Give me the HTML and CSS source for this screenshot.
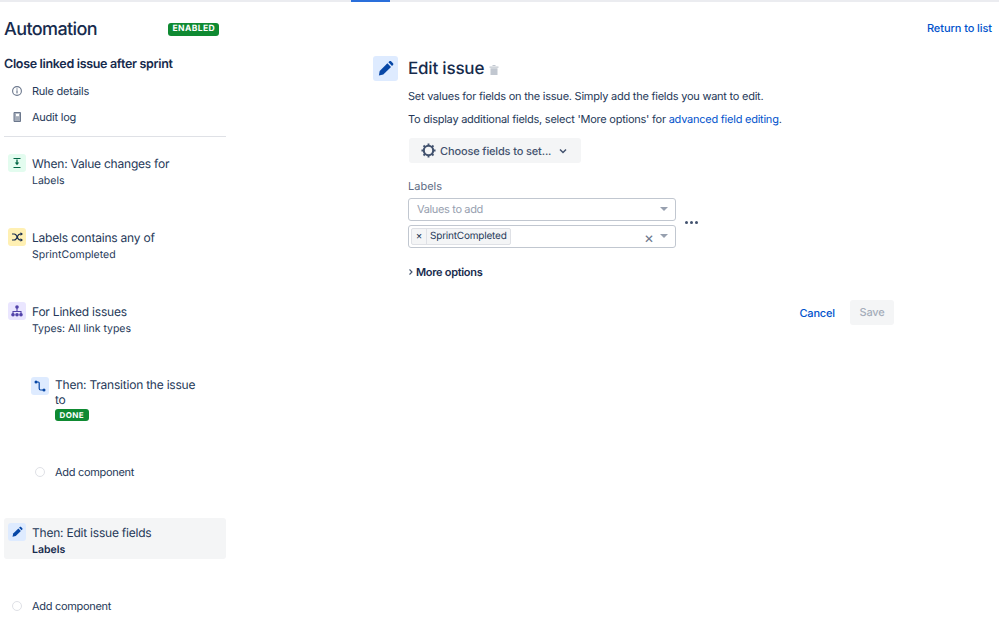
FILE: index.html
```html
<!DOCTYPE html>
<html lang="en">
<head>
<meta charset="utf-8">
<title>Automation</title>
<link rel="stylesheet" href="styles.css">
</head>
<body>
<div class="topbar"><div class="tab-active"></div></div>
<div class="page">
  <aside class="side">
    <div class="side-head">
      <h1 class="app-title">Automation</h1>
      <span class="lozenge lozenge-head">ENABLED</span>
    </div>
    <h2 class="rule-name">Close linked issue after sprint</h2>
    <nav class="side-nav">
      <div class="nav-item">
        <svg class="nav-icon" viewBox="0 0 12 12"><circle cx="6" cy="6" r="4.4" fill="none" stroke="#6b778c" stroke-width="1.1"/><rect x="5.4" y="5.3" width="1.2" height="3.1" fill="#6b778c"/><rect x="5.4" y="3.4" width="1.2" height="1.2" fill="#6b778c"/></svg>
        <span>Rule details</span>
      </div>
      <div class="nav-item">
        <svg class="nav-icon" viewBox="0 0 12 12"><path d="M3 1.500h6.500v9H3z" fill="#a5adba" stroke="#6b778c"/><rect x="5" y="2.800" width="3" height="2.400" fill="#fff"/></svg>
        <span>Audit log</span>
      </div>
    </nav>
    <div class="steps">
      <div class="step step-trigger">
        <div class="step-icon icon-green"><svg viewBox="0 0 18 18"><path d="M5.500 4.500h7M5.500 13.500h7" stroke="#006644" stroke-width="1.200"/><path d="M9 5.500v3.500" stroke="#006644" stroke-width="1.300"/><path d="M6.800 8.500h4.400L9 11.200z" fill="#006644"/></svg></div>
        <div class="step-text"><div class="step-title">When: Value changes for</div><div class="step-sub">Labels</div></div>
      </div>
      <div class="step step-trigger">
        <div class="step-icon icon-yellow"><svg viewBox="0 0 18 18"><path d="M4 6h2.200c1.600 0 2.200 1 3 3s1.400 3 3 3h1.300M4 12h2.200c1.600 0 2.200-1 3-3s1.400-3 3-3h1.300" fill="none" stroke="#172b4d" stroke-width="1.200"/><path d="M12.500 4.200 15 6l-2.500 1.800zM12.500 10.200 15 12l-2.500 1.800z" fill="#172b4d"/></svg></div>
        <div class="step-text"><div class="step-title">Labels contains any of</div><div class="step-sub">SprintCompleted</div></div>
      </div>
      <div class="step step-branch">
        <div class="step-icon icon-purple"><svg viewBox="0 0 18 18"><path d="M9 5v4M5 12.500V9.500h8v3" fill="none" stroke="#5243aa" stroke-width="1.100"/><circle cx="9" cy="5" r="1.800" fill="#5243aa"/><circle cx="5" cy="12.800" r="1.800" fill="#5243aa"/><circle cx="9" cy="12.800" r="1.800" fill="#5243aa"/><circle cx="13" cy="12.800" r="1.800" fill="#5243aa"/></svg></div>
        <div class="step-text"><div class="step-title">For Linked issues</div><div class="step-sub">Types: All link types</div></div>
      </div>
      <div class="step step-nested">
        <div class="step-icon icon-blue"><svg viewBox="0 0 18 18"><path d="M5 5h2.300c.6 0 .9.300.9.900v5.600c0 1 .5 1.500 1.500 1.500H13" fill="none" stroke="#0747a6" stroke-width="1.200"/><circle cx="5" cy="5" r="1.500" fill="#0747a6"/><circle cx="13" cy="13" r="1.500" fill="#0747a6"/></svg></div>
        <div class="step-text"><div class="step-title wrap">Then: Transition the issue to</div><span class="lozenge lozenge-done">DONE</span></div>
      </div>
      <div class="add add-nested"><span class="add-dot"></span><span>Add component</span></div>
      <div class="step step-selected">
        <div class="step-icon icon-blue"><svg viewBox="0 0 18 18"><path d="M5.200 10.600 10.400 5.400l2.500 2.500-5.200 5.200-3.200.7z" fill="#0747a6"/><path d="M11.100 4.700l.7-.7c.4-.4.900-.4 1.300 0l1.200 1.200c.4.400.4.900 0 1.300l-.7.700z" fill="#0747a6"/></svg></div>
        <div class="step-text"><div class="step-title">Then: Edit issue fields</div><div class="step-sub strong">Labels</div></div>
      </div>
      <div class="add add-root"><span class="add-dot"></span><span>Add component</span></div>
    </div>
  </aside>
  <main class="main">
    <div class="main-top"><a class="link return">Return to list</a></div>
    <div class="editor">
      <div class="editor-icon"><svg viewBox="0 0 25 25"><path d="M6.700 15 14.400 7.300l3.600 3.600-7.700 7.700-4.400 1z" fill="#0747a6"/><path d="M15.400 6.300l1-1c.5-.5 1.200-.5 1.700 0l1.900 1.900c.5.500.5 1.200 0 1.700l-1 1z" fill="#0747a6"/></svg></div>
      <div class="editor-body">
        <div class="editor-head">
          <h2 class="editor-title">Edit issue</h2>
          <svg class="trash" viewBox="0 0 12 12"><path d="M1.500 2.500h9v1.200h-9zM4.500 1h3v1h-3zM2.500 4.300h7V11h-7z" fill="#c1c7d0"/></svg>
        </div>
        <p class="desc desc-first">Set values for fields on the issue. Simply add the fields you want to edit.</p>
        <p class="desc">To display additional fields, select 'More options' for <a class="link-plain">advanced field editing</a>.</p>
        <div class="choose">
          <svg class="gear" viewBox="0 0 16 16"><circle cx="8" cy="8" r="5" fill="none" stroke="#42526e" stroke-width="2.200"/><path d="M8 .5v2.400M8 13.100v2.400M.5 8h2.400M13.100 8h2.400M2.700 2.700l1.700 1.700M11.600 11.600l1.700 1.700M2.700 13.300l1.700-1.700M11.600 4.400l1.700-1.700" stroke="#42526e" stroke-width="2"/></svg>
          <span>Choose fields to set...</span>
          <svg class="chev" viewBox="0 0 10 10"><path d="M2 3.500 5 6.500l3-3" fill="none" stroke="#42526e" stroke-width="1.500"/></svg>
        </div>
        <div class="field-label">Labels</div>
        <div class="field-row">
          <div class="selects">
            <div class="select"><span class="placeholder">Values to add</span><span class="caret"></span></div>
            <div class="select select-tags">
              <span class="tag"><span class="tag-x">×</span><span class="tag-text">SprintCompleted</span></span>
              <span class="clear">×</span><span class="caret"></span>
            </div>
          </div>
          <div class="dots"><i></i><i></i><i></i></div>
        </div>
        <div class="more">
          <svg class="more-chev" viewBox="0 0 6 8"><path d="M1.500 1.500 4 4 1.500 6.500" fill="none" stroke="#42526e" stroke-width="1.100"/></svg>
          <span>More options</span>
        </div>
        <div class="actions">
          <a class="link cancel">Cancel</a>
          <span class="save">Save</span>
        </div>
      </div>
    </div>
  </main>
</div>
</body>
</html>
```

FILE: styles.css
```css
* { box-sizing: border-box; }
html, body { margin: 0; padding: 0; }
body {
  width: 999px;
  height: 625px;
  overflow: hidden;
  background: #fff;
  color: #172b4d;
  font-family: Inter, "Liberation Sans", sans-serif;
  font-size: 11px;
  text-rendering: geometricPrecision;
}
.topbar { height: 2px; background: #ebecf0; padding-left: 351px; }
.tab-active { width: 39px; height: 2px; background: #2a6fdb; }
.page { display: flex; align-items: flex-start; }

.side { width: 222px; margin-left: 4px; flex: none; }
.side-head { display: flex; align-items: center; justify-content: space-between; height: 24px; margin-top: 15px; padding-right: 7px; }
.app-title { margin: 0; font-size: 18px; font-weight: 500; letter-spacing: -.6px; }
.lozenge { display: inline-block; background: #0f8a32; color: #fff; font-weight: 700; border-radius: 3px; letter-spacing: .4px; }
.lozenge-head { font-size: 8.500px; line-height: 13px; padding: 0 4px; }
.rule-name { margin: 15px 0 0; font-size: 12.500px; line-height: 18px; font-weight: 600; letter-spacing: -.32px; }
.side-nav { margin-top: 4px; padding-bottom: 6px; border-bottom: 1px solid #dfe1e6; }
.nav-item { display: flex; align-items: center; height: 26px; padding-left: 7px; font-size: 11px; letter-spacing: -.24px; color: #253858; }
.nav-icon { width: 12px; height: 12px; margin-right: 9px; flex: none; }

.steps { margin-top: 17px; }
.step { display: flex; align-items: flex-start; padding-left: 4px; }
.step-trigger { height: 74px; }
.step-branch { height: 75px; }
.step-icon { width: 18px; height: 18px; border-radius: 3px; flex: none; }
.step-icon svg { display: block; width: 18px; height: 18px; }
.icon-green { background: #e3fcef; }
.icon-yellow { background: #fff0b3; }
.icon-purple { background: #eae6ff; }
.icon-blue { background: #deebff; }
.step-text { margin-left: 6px; padding-top: 2px; }
.step-title { font-size: 12px; line-height: 15px; letter-spacing: -.22px; color: #253858; }
.step-sub { font-size: 10.500px; line-height: 14px; margin-top: 3px; color: #253858; }
.step-sub.strong { font-weight: 600; color: #172b4d; }
.step-nested { padding-left: 27px; height: 80px; }
.step-nested .step-text { padding-top: 0; }
.wrap { width: 150px; }
.lozenge-done { display: block; width: fit-content; font-size: 8px; line-height: 12px; padding: 0 4.500px; margin-top: 2px; }
.add { display: flex; align-items: center; font-size: 11px; line-height: 14px; letter-spacing: -.3px; color: #253858; }
.add-dot { width: 10px; height: 10px; border-radius: 50%; border: 1px solid #dfe1e6; margin-right: 10px; flex: none; }
.add-nested { padding-left: 31px; height: 14px; margin-top: 8px; }
.add-root { padding-left: 8px; height: 14px; margin-top: 40px; }
.step-selected { margin-top: 39px; height: 41px; padding-top: 5px; background: #f4f5f6; border-radius: 3px; }

.main { flex: 1; padding-left: 147px; padding-right: 7px; }
.main-top { display: flex; justify-content: flex-end; height: 20px; margin-top: 19px; }
.link { color: #0052cc; font-weight: 500; }
.return { font-size: 11px; line-height: 15px; letter-spacing: -.08px; }
.link-plain { color: #0052cc; }
.editor { display: flex; margin-top: 15px; }
.editor-icon { width: 25px; height: 25px; background: #deebff; border-radius: 3px; flex: none; }
.editor-icon svg { display: block; width: 25px; height: 25px; }
.editor-body { margin-left: 10px; width: 486px; }
.editor-head { display: flex; align-items: center; height: 25px; }
.editor-title { margin: 0; font-size: 17px; font-weight: 500; letter-spacing: -.2px; }
.trash { width: 12px; height: 12px; margin-left: 4px; margin-top: 2px; }
.desc { margin: 0; font-size: 11px; line-height: 15px; letter-spacing: -.24px; color: #253858; }
.desc-first { margin-top: 8px; }
.desc + .desc { margin-top: 8px; }
.choose { display: flex; align-items: center; width: 172px; height: 25px; margin: 11px 0 0 1px; background: #f4f5f6; border-radius: 3px; padding-left: 12px; font-size: 11px; font-weight: 500; letter-spacing: -.14px; color: #42526e; }
.gear { width: 15px; height: 15px; margin-right: 4px; }
.chev { width: 10px; height: 10px; margin-left: 7px; }
.field-label { margin-top: 16px; font-size: 11px; line-height: 14px; color: #5e6c84; }
.field-row { display: flex; align-items: center; margin-top: 5px; }
.selects { width: 268px; }
.select { position: relative; display: flex; align-items: center; height: 23px; border: 1px solid #c1c7d0; border-radius: 3px; padding-left: 8px; }
.select-tags { margin-top: 4px; padding-left: 2px; }
.placeholder { font-size: 11px; line-height: 19px; letter-spacing: -.35px; color: #97a0af; margin-top: -1px; }
.caret { position: absolute; right: 7px; top: 8px; width: 0; height: 0; border-left: 4px solid transparent; border-right: 4px solid transparent; border-top: 4px solid #97a0af; }
.tag { display: inline-flex; height: 17px; line-height: 15px; background: #f4f5f6; border: 1px solid #dfe1e6; border-radius: 2px; font-size: 10px; letter-spacing: -.2px; color: #253858; }
.tag-x { width: 15px; text-align: center; border-right: 1px solid #dfe1e6; }
.tag-text { padding: 0 3px; }
.clear { position: absolute; right: 21px; top: 4px; font-size: 15px; line-height: 15px; color: #6b778c; }
.dots { display: flex; gap: 2px; margin-left: 9px; margin-top: -1px; }
.dots i { width: 3px; height: 3px; border-radius: 50%; background: #42526e; }
.more { display: flex; align-items: center; margin-top: 17px; font-size: 11px; line-height: 14px; font-weight: 600; letter-spacing: -.3px; }
.more-chev { width: 6px; height: 8px; margin-right: 2px; }
.actions { display: flex; align-items: center; justify-content: flex-end; gap: 15px; margin-top: 21px; width: 486px; }
.cancel { font-size: 11px; letter-spacing: -.15px; }
.save { display: block; width: 44px; height: 25px; line-height: 25px; text-align: center; background: #f4f5f6; border-radius: 3px; font-size: 11px; font-weight: 500; letter-spacing: -.2px; color: #a5adba; }
```
